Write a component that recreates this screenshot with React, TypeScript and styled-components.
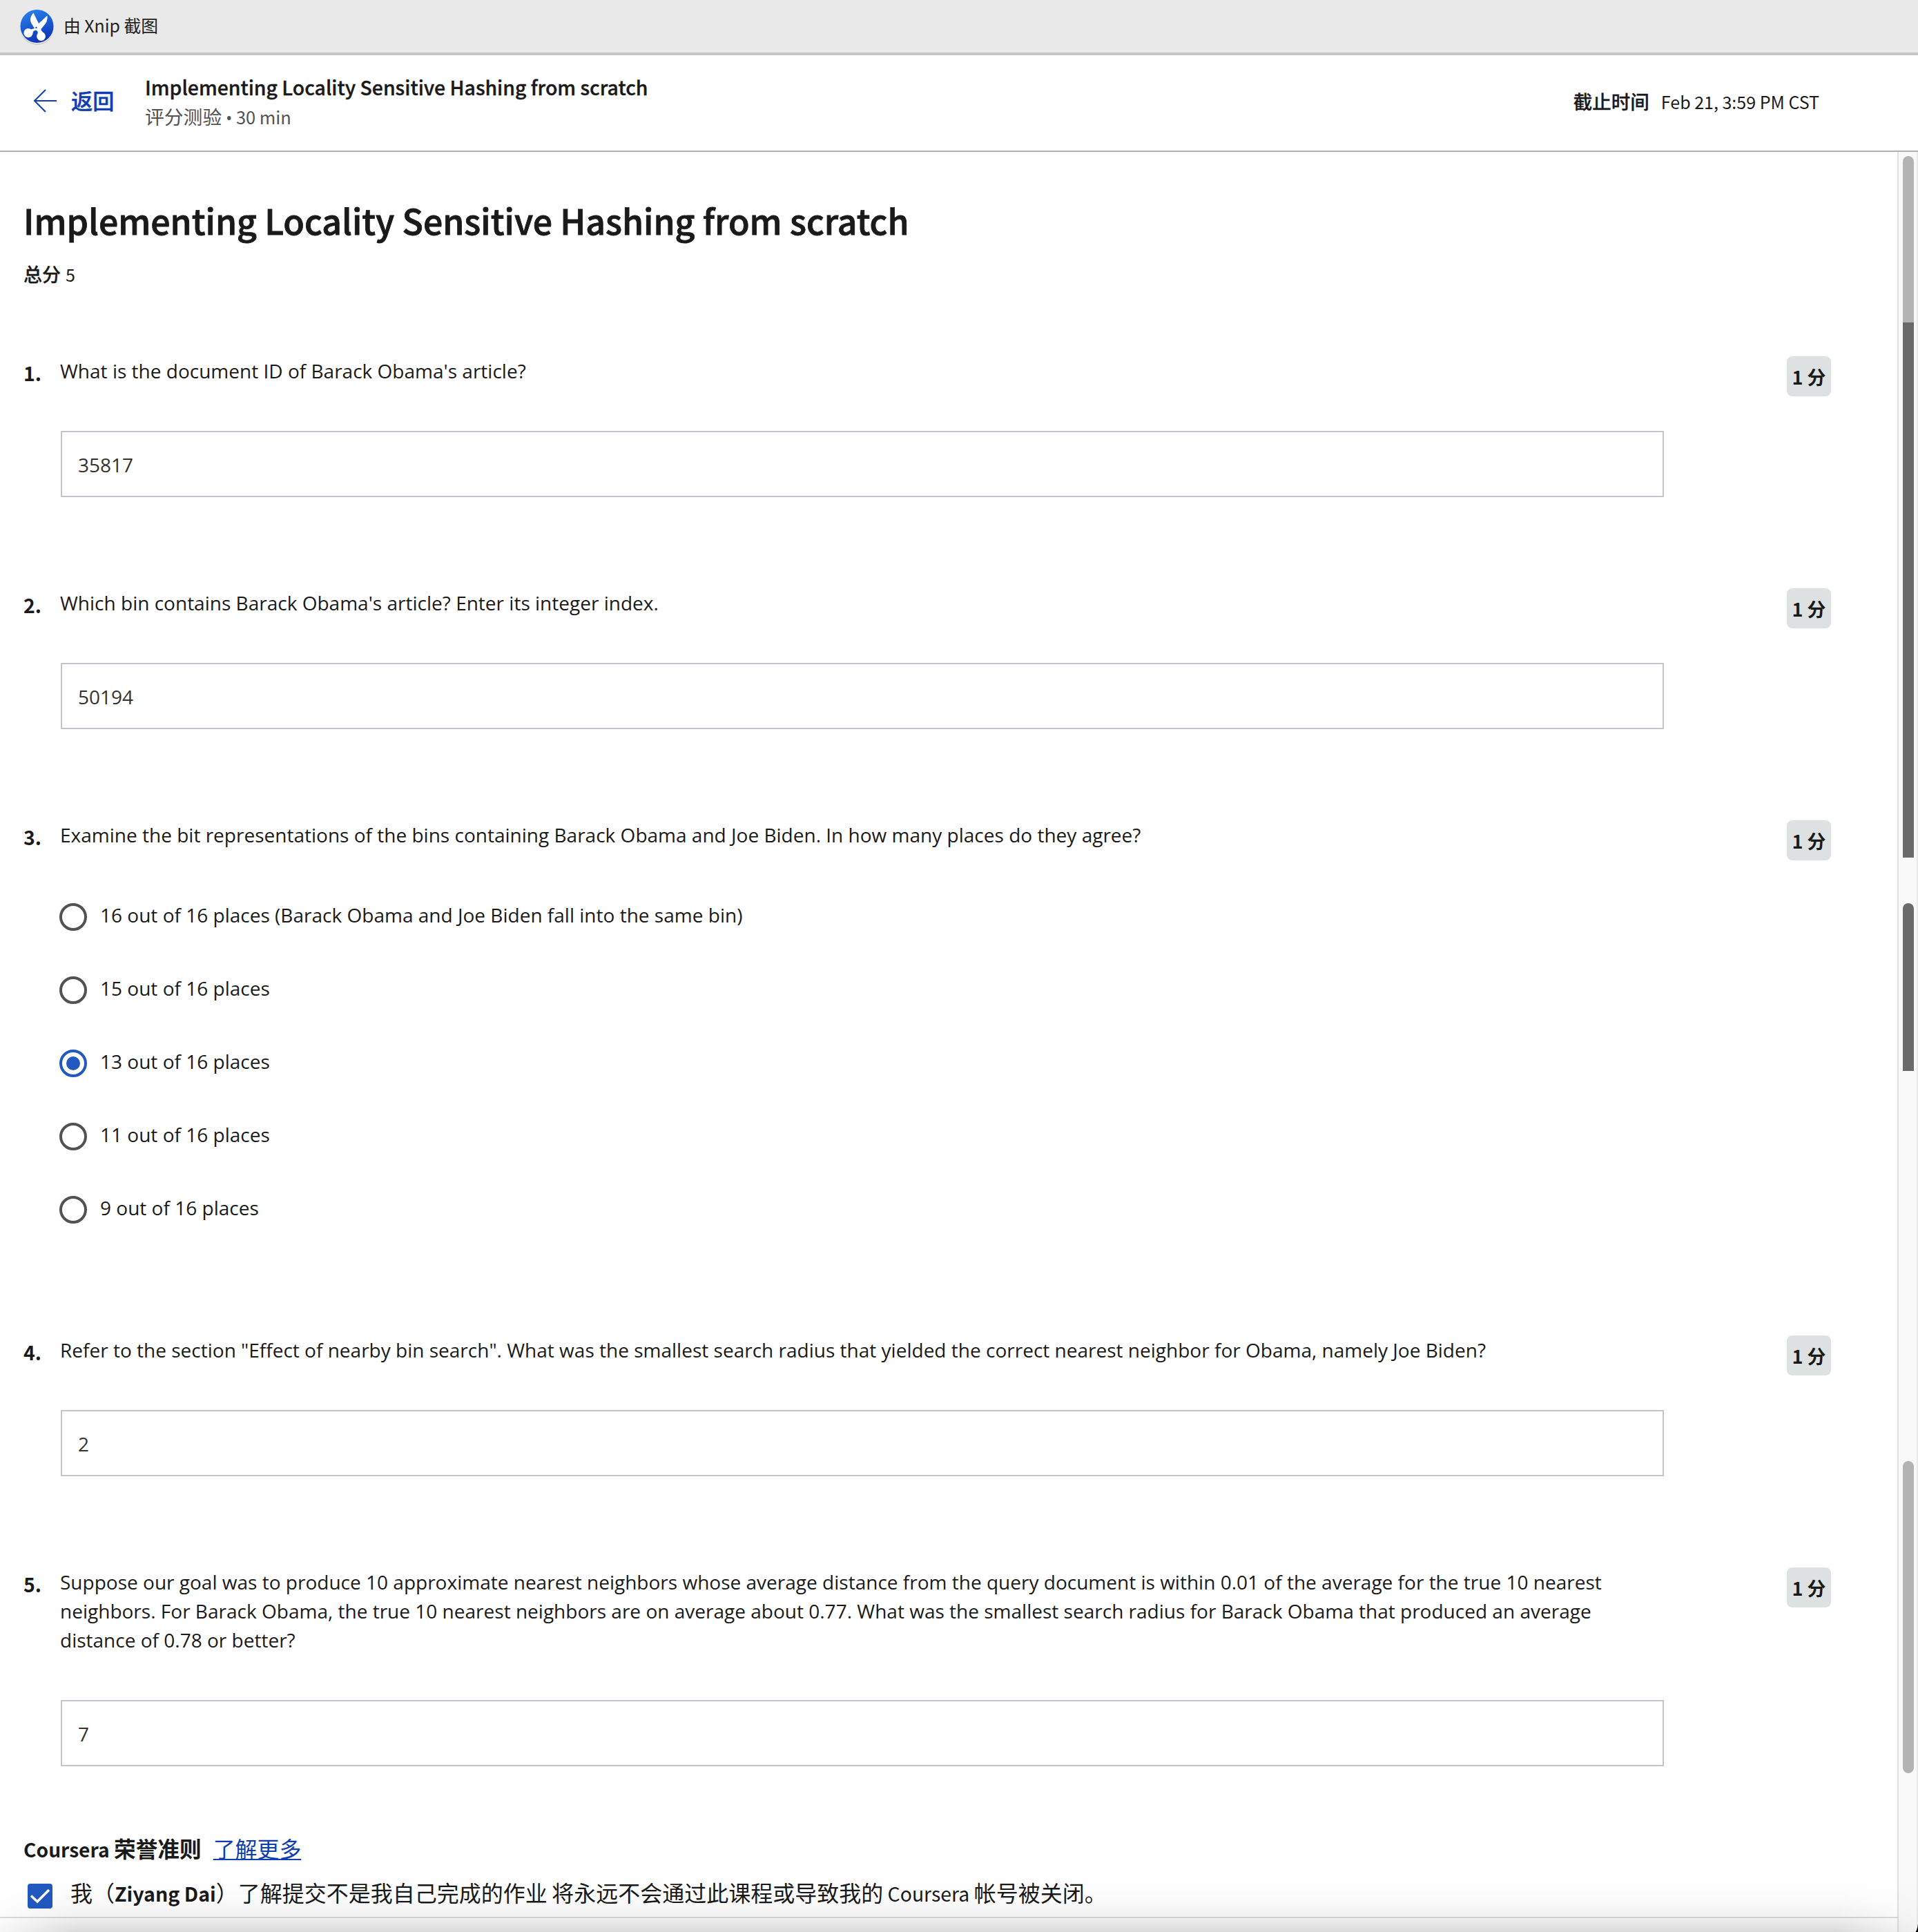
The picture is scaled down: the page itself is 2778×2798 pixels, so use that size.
import React from "react";
import styled, { createGlobalStyle } from "styled-components";

const GlobalStyle = createGlobalStyle`
  * { box-sizing: border-box; }
  body { margin: 0; background: #fff; }
`;

const SANS = `"Noto Sans CJK SC", sans-serif`;
const OPEN = `"Open Sans", "Noto Sans CJK SC", sans-serif`;

const Page = styled.div`
  position: relative;
  width: 2778px;
  height: 2798px;
  overflow: hidden;
  display: flex;
  flex-direction: column;
  background: #fff;
  color: #1a1a1a;
  font-family: ${SANS};
`;

const WatermarkBar = styled.div`
  height: 80px;
  flex: none;
  display: flex;
  align-items: center;
  gap: 12px;
  padding: 0 28px 5px;
  background: #e9e9e9;
  border-bottom: 4px solid #c5c5c5;
  font-size: 24.8px;
  line-height: 36px;
  color: #222;
`;

const Logo = styled.svg`
  width: 52px;
  height: 56px;
  margin-top: 7px;
`;

const Header = styled.header`
  height: 140px;
  flex: none;
  display: flex;
  align-items: center;
  padding: 0 143px 0 47px;
  border-bottom: 2px solid #b0b0b0;
`;

const Back = styled.a`
  display: flex;
  align-items: center;
  gap: 20px;
  width: 163px;
  padding-bottom: 7px;
  color: #0f3db3;
  font-size: 31.2px;
  font-weight: 500;
  line-height: 40px;
  -webkit-text-stroke: 0.4px currentColor;
`;

const BackLabel = styled.span`
  padding-bottom: 2px;
`;

const HeaderText = styled.div`
  flex: 1;
  display: flex;
  flex-direction: column;
  padding-bottom: 4px;
`;

const HeaderTitle = styled.div`
  font-size: 28.38px;
  font-weight: 500;
  line-height: 43px;
  -webkit-text-stroke: 0.4px currentColor;
`;

const HeaderSub = styled.div`
  font-size: 27.8px;
  line-height: 42px;
  color: #525252;
`;

const SubLatin = styled.span`
  font-size: 25.4px;
`;

const Bullet = styled.span`
  font-family: "Open Sans", sans-serif;
  font-size: 25px;
`;

const Deadline = styled.div`
  display: flex;
  align-items: baseline;
  gap: 17px;
  padding-bottom: 5px;
  font-size: 25px;
  line-height: 42px;
`;

const DeadlineLabel = styled.span`
  font-size: 27.5px;
  font-weight: 500;
  -webkit-text-stroke: 0.3px currentColor;
`;

const Body = styled.div`
  flex: 1;
  display: flex;
  min-height: 0;
`;

const Content = styled.main`
  flex: 1;
  padding: 0 96px 0 34px;
`;

const Title = styled.h1`
  margin: 60px 0 0;
  font-size: 49.96px;
  font-weight: 500;
  line-height: 76px;
  -webkit-text-stroke: 0.9px currentColor;
`;

const Total = styled.div`
  display: flex;
  align-items: baseline;
  gap: 7px;
  margin-top: 20px;
  font-size: 25px;
  line-height: 42px;
`;

const TotalLabel = styled.span`
  font-size: 27px;
  font-weight: 500;
  -webkit-text-stroke: 0.3px currentColor;
`;

const Questions = styled.div`
  display: flex;
  flex-direction: column;
  margin-top: 98px;
`;

const QuestionRow = styled.section<{ $height: number }>`
  display: flex;
  align-items: flex-start;
  height: ${(p) => p.$height}px;
`;

const Num = styled.div`
  width: 53px;
  padding-top: 4px;
  font-size: 28.5px;
  font-weight: 700;
  line-height: 40px;
`;

const QuestionMain = styled.div`
  width: 2323px;
  display: flex;
  flex-direction: column;
`;

const Prompt = styled.div`
  font-family: ${OPEN};
  font-size: 28px;
  letter-spacing: 0.008px;
  line-height: 42px;
  max-width: 2260px;
`;

const Answer = styled.div`
  height: 96px;
  margin: 66px 0 0 1px;
  padding: 2px 23px 0;
  display: flex;
  align-items: center;
  border: 2px solid #c1c3cf;
  font-family: ${OPEN};
  font-size: 28px;
  color: #333;
`;

const Badge = styled.div`
  margin-left: auto;
  width: 64px;
  height: 58px;
  padding-top: 1px;
  border-radius: 8px;
  background: #dde1e2;
  display: flex;
  align-items: center;
  justify-content: center;
  font-size: 27px;
  font-weight: 700;
  line-height: 36px;
  white-space: nowrap;
`;

const Options = styled.div`
  display: flex;
  flex-direction: column;
  gap: 66px;
  margin: 78px 0 0 -1px;
`;

const Option = styled.label`
  display: flex;
  height: 40px;
  gap: 19px;
  font-family: ${OPEN};
  font-size: 28px;
  letter-spacing: 0.01px;
  line-height: 34px;
`;

const Radio = styled.span<{ $on: boolean }>`
  width: 40px;
  height: 40px;
  border-radius: 50%;
  border: 4px solid ${(p) => (p.$on ? "#2259c0" : "#525252")};
  display: flex;
  align-items: center;
  justify-content: center;
  &::after {
    content: "";
    width: 20px;
    height: 20px;
    border-radius: 50%;
    background: ${(p) => (p.$on ? "#2259c0" : "transparent")};
  }
`;

const Honor = styled.div`
  display: flex;
  align-items: baseline;
  gap: 17px;
  font-size: 31.9px;
  line-height: 48px;
`;

const HonorTitle = styled.span`
  font-size: 31.7px;
  font-weight: 700;
`;

const HonorBrand = styled.span`
  font-size: 28.2px;
`;

const More = styled.a`
  color: #0f3db3;
  text-decoration: underline;
  text-decoration-thickness: 2px;
  text-decoration-skip-ink: none;
  text-underline-offset: 2px;
`;

const Agree = styled.label`
  display: flex;
  align-items: center;
  gap: 26px;
  margin-top: 14px;
  padding-left: 6px;
  font-size: 32px;
  line-height: 48px;
  white-space: nowrap;
`;

const CheckBox = styled.span`
  width: 36px;
  height: 36px;
  margin-top: 12px;
  border-radius: 4px;
  background: #2259c0;
  display: flex;
`;

const AgreeText = styled.span`
  height: 48px;
`;

const Latin = styled.span`
  font-size: 28.4px;
`;

const Strong = styled.b`
  font-size: 28.6px;
`;

const ScrollTrack = styled.aside`
  width: 30px;
  border-left: 2px solid #e0e0e0;
  border-right: 2px solid #e9e9e9;
  background: #f9f9f9;
  display: flex;
  flex-direction: column;
  padding: 6px 4px 0 6px;
`;

const Thumb = styled.div<{ $h: number; $gap?: number; $dark?: boolean; $r: string }>`
  flex: none;
  height: ${(p) => p.$h}px;
  margin-top: ${(p) => p.$gap || 0}px;
  background: ${(p) => (p.$dark ? "#6a6a6a" : "#b3b3b3")};
  border-radius: ${(p) => p.$r};
`;

const BottomLine = styled.div`
  position: absolute;
  left: 0;
  top: 2776px;
  width: 2750px;
  height: 2px;
  background: #dcdcdc;
`;

const BottomShade = styled.div`
  position: absolute;
  left: 0;
  right: 0;
  bottom: 0;
  height: 80px;
  background: linear-gradient(to bottom, rgba(0,0,0,0) 0, rgba(0,0,0,0.02) 34px, rgba(0,0,0,0.06) 58px, rgba(0,0,0,0.14) 80px);
  mask-image: linear-gradient(to right, rgba(0,0,0,0.25) 0, #000 110px, #000 2660px, rgba(0,0,0,0.25) 2778px);
`;

const Corner = styled.svg`
  position: absolute;
  right: 0;
  bottom: 0;
  width: 14px;
  height: 14px;
`;

const questions = [
  { text: "What is the document ID of Barack Obama's article?", answer: "35817", height: 336 },
  { text: "Which bin contains Barack Obama's article? Enter its integer index.", answer: "50194", height: 336 },
  {
    text: "Examine the bit representations of the bins containing Barack Obama and Joe Biden. In how many places do they agree?",
    options: [
      "16 out of 16 places (Barack Obama and Joe Biden fall into the same bin)",
      "15 out of 16 places",
      "13 out of 16 places",
      "11 out of 16 places",
      "9 out of 16 places",
    ],
    selected: 2,
    height: 746,
  },
  {
    text: 'Refer to the section "Effect of nearby bin search". What was the smallest search radius that yielded the correct nearest neighbor for Obama, namely Joe Biden?',
    answer: "2",
    height: 336,
  },
  {
    text: "Suppose our goal was to produce 10 approximate nearest neighbors whose average distance from the query document is within 0.01 of the average for the true 10 nearest neighbors. For Barack Obama, the true 10 nearest neighbors are on average about 0.77. What was the smallest search radius for Barack Obama that produced an average distance of 0.78 or better?",
    answer: "7",
    height: 382,
  },
];

export default function App() {
  return (
    <Page>
      <GlobalStyle />
      <WatermarkBar>
        <Logo viewBox="0 0 52 56">
          <defs>
            <linearGradient id="disc" x1="0" y1="0" x2="0.3" y2="1">
              <stop offset="0" stopColor="#2a86f0" />
              <stop offset="1" stopColor="#1038b8" />
            </linearGradient>
          </defs>
          <ellipse cx="25.5" cy="29" rx="25" ry="25" fill="#000" opacity="0.12" />
          <circle cx="25.5" cy="27" r="25.4" fill="#e4e8ee" />
          <circle cx="25.5" cy="27" r="24" fill="url(#disc)" />
          <path
            d="M20.5 7.5 C15.5 13 15 18 17.5 23 L22 30 L17 31.5 A6.6 6.6 0 1 0 19.6 36.5 Q20 33.5 24 32.8 Q27.5 34 26.6 37.5 A6.4 6.4 0 1 0 33.8 35.6 Q31 33 31.5 31 L38.5 22.5 Q41 18 40.5 11.5 L28 23 Z"
            fill="#fff"
          />
          <circle cx="24.5" cy="29" r="1.3" fill="#2468dc" />
        </Logo>
        由 Xnip 截图
      </WatermarkBar>
      <Header>
        <Back>
          <svg width="36" height="36" viewBox="0 0 36 36" fill="none" stroke="#0f3db3" strokeWidth="2">
            <path d="M19 2 L3 18 L19 34 M3 18 H35" />
          </svg>
          <BackLabel>返回</BackLabel>
        </Back>
        <HeaderText>
          <HeaderTitle>Implementing Locality Sensitive Hashing from scratch</HeaderTitle>
          <HeaderSub>
            评分测验
            <SubLatin>
              {" "}
              <Bullet>•</Bullet> 30 min
            </SubLatin>
          </HeaderSub>
        </HeaderText>
        <Deadline>
          <DeadlineLabel>截止时间</DeadlineLabel>
          <span>Feb 21, 3:59 PM CST</span>
        </Deadline>
      </Header>
      <Body>
        <Content>
          <Title>Implementing Locality Sensitive Hashing from scratch</Title>
          <Total>
            <TotalLabel>总分</TotalLabel>
            <span>5</span>
          </Total>
          <Questions>
            {questions.map((q, i) => (
              <QuestionRow key={i} $height={q.height}>
                <Num>{i + 1}.</Num>
                <QuestionMain>
                  <Prompt>{q.text}</Prompt>
                  {q.answer && <Answer>{q.answer}</Answer>}
                  {q.options && (
                    <Options>
                      {q.options.map((o, k) => (
                        <Option key={o}>
                          <Radio $on={k === q.selected} />
                          {o}
                        </Option>
                      ))}
                    </Options>
                  )}
                </QuestionMain>
                <Badge>1 分</Badge>
              </QuestionRow>
            ))}
          </Questions>
          <Honor>
            <HonorTitle>
              <HonorBrand>Coursera </HonorBrand>荣誉准则
            </HonorTitle>
            <More>了解更多</More>
          </Honor>
          <Agree>
            <CheckBox>
              <svg width="36" height="36" viewBox="0 0 36 36" fill="none" stroke="#fff" strokeWidth="3.6">
                <path d="M5 17.5 L14 26 L31 9" />
              </svg>
            </CheckBox>
            <AgreeText>
              我（<Strong>Ziyang Dai</Strong>）了解提交不是我自己完成的作业
              <Latin> </Latin>
              将永远不会通过此课程或导致我的
              <Latin> Coursera </Latin>
              帐号被关闭。
            </AgreeText>
          </Agree>
        </Content>
        <ScrollTrack>
          <Thumb $h={241} $r="8px 8px 0 0" />
          <Thumb $h={775} $dark $r="0" />
          <Thumb $h={243} $gap={66} $dark $r="8px 8px 0 0" />
          <Thumb $h={452} $gap={565} $r="8px" />
        </ScrollTrack>
      </Body>
      <BottomLine />
      <BottomShade />
      <Corner viewBox="0 0 14 14">
        <path d="M14 0 Q13 8 9 14 H14 Z" fill="#fff" />
        <path d="M14 2 Q13.5 9 10.5 14 H14 Z" fill="#000" />
      </Corner>
    </Page>
  );
}
